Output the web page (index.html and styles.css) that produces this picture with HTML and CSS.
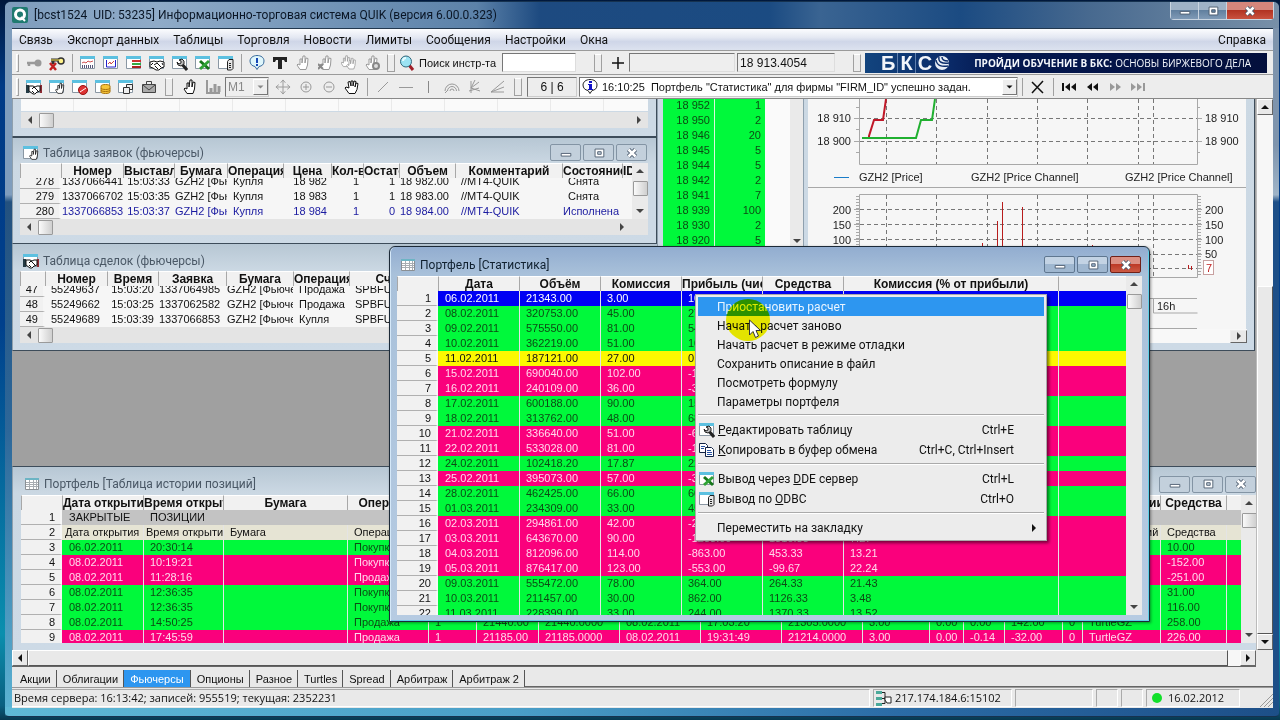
FILE: index.html
```html
<!DOCTYPE html>
<html lang="ru">
<head>
<meta charset="utf-8">
<title>Информационно-торговая система QUIK</title>
<link rel="stylesheet" href="styles.css">
</head>
<body>
<svg class="defs" aria-hidden="true">
  <symbol id="sheet" viewBox="0 0 16 16"><path fill="#fff" stroke="#8a97a3" d="M.5 1.5h14v12H.5z"/><path fill="#5cc0e0" d="M0 1h15v3H0z"/></symbol>
  <symbol id="grid" viewBox="0 0 16 16"><path fill="#fff" stroke="#8a8f94" d="M1.500 2.500h13v11h-13z"/><path fill="#6cb4c4" d="M1 2h14v2H1z"/><path stroke="#a8adb2" d="M5.500 4v9M9.500 4v9M12.500 4v9M2 6.500h12M2 8.500h12M2 10.500h12"/></symbol>
  <symbol id="key" viewBox="0 0 16 16"><path fill="none" stroke="#999" stroke-width="2.500" d="M1 8h9M3 9v2"/><circle cx="12" cy="8" r="3.500" fill="#999"/></symbol>
  <symbol id="keyoff" viewBox="0 0 16 16"><path fill="none" stroke="#333" stroke-width="3" d="M2 5h9M4 6v3"/><circle cx="12" cy="6" r="3" fill="#fff28a" stroke="#333" stroke-width="1.500"/><path stroke="#ffe64a" d="M2 5h8"/><path stroke="#c22020" stroke-width="2.500" d="m1 8 6 7M7 8l-6 7"/></symbol>
  <symbol id="chart" viewBox="0 0 16 16"><use href="#sheet"/><path fill="none" stroke="#d05050" d="m2 8 2-1 2 1 2-2 2 1 3-1"/><path stroke="#557" stroke-dasharray="1 1" stroke-width="3" d="M2 11.500h12"/></symbol>
  <symbol id="chart2" viewBox="0 0 16 16"><use href="#sheet"/><path fill="none" stroke="#22c" d="M3.500 5v7h9V5"/><path fill="none" stroke="#c44" d="m5 9 2-2 1 2 3-3"/></symbol>
  <symbol id="glass" viewBox="0 0 16 16"><use href="#sheet"/><path stroke="#c33" stroke-width="2" d="M6 6h9"/><path stroke="#3a4" stroke-width="2" d="M6 9h9"/><path stroke="#a22" stroke-width="2" d="M6 12h9"/></symbol>
  <symbol id="hands" viewBox="0 0 16 16"><use href="#sheet"/><path fill="#233a44" d="M0 6h3v8H0z"/><path fill="#8c2b33" d="M14 6h2v8h-2z"/><path fill="#fff" stroke="#111" d="M3 7h4l2 1 2-1h3v5l-3 1-2 2H7l-4-3z"/><path stroke="#111" fill="none" d="m6 10 2-2 4 4M6 12l2 2"/></symbol>
  <symbol id="hands2" viewBox="0 0 16 16"><use href="#sheet"/><path fill="#fff" stroke="#111" d="M1 7l4-1 3 1 3-1 4 1v5l-3 1-2 2H7l-3-2-3-1z"/><path stroke="#111" fill="none" d="m5 10 3-2 4 4M6 11l3 3M4 8 2 10M13 8l1 2"/></symbol>
  <symbol id="wrench" viewBox="0 0 16 16"><use href="#sheet"/><path fill="none" stroke="#222" stroke-width="3" d="m9 8 6 7"/><path fill="#bbb" stroke="#222" d="m5 7 2 2 2-1V6L7 5l3-1 2 2v3l-3 2-3-1z"/></symbol>
  <symbol id="excel" viewBox="0 0 16 16"><use href="#sheet"/><path stroke="#15761a" stroke-width="3" d="m5 6 9 8"/><path stroke="#2fa336" stroke-width="3" d="m14 6-9 8"/></symbol>
  <symbol id="base" viewBox="0 0 16 16"><use href="#sheet"/><path fill="#e6e6e6" stroke="#222" d="M9.500 6.500 11 4.500h4v9l-1.500 1.500h-4z"/><path stroke="#222" d="M11 8.500h2M11 10.500h2M11 12.500h2"/></symbol>
  <symbol id="info" viewBox="0 0 16 16"><path fill="#dff6fb" stroke="#3a6c9c" d="M8 .5c4 0 7 2 7 5.500s-2 5-5 5.500l-2 3-2-3C3 11 1 9 1 6S4 .5 8 .5z"/><path stroke="#1747b5" stroke-width="2" d="M8 3v5M8 9v2"/></symbol>
  <symbol id="note" viewBox="0 0 16 16"><path fill="#fff" stroke="#222" d="M8 .5c4 0 7 2 7 5.500s-2 5-5 5.500l-2 3-2-3C3 11 1 9 1 6S4 .5 8 .5z"/><path fill="#1212c8" d="M7 2h3v2H7zM6 5h4v5h1v1H6v-1h1V6H6z"/></symbol>
  <symbol id="tee" viewBox="0 0 16 16"><path fill="#222" d="M1 2h14v5h-2l-1-2h-2v9H6V5H4L3 7H1z"/></symbol>
  <symbol id="palm" viewBox="0 0 16 16"><path fill="#fff" stroke="currentColor" d="M5 14.500 2 10l1-1 2 1V4h2v4l1-7h2v7l1-5 2 .5-.5 6.500-1.500 4.500z"/></symbol>
  <symbol id="palmx" viewBox="0 0 16 16"><use href="#palm"/><path stroke="#888" stroke-width="2" d="m0 9 5 5M5 9l-5 5"/></symbol>
  <symbol id="palms" viewBox="0 0 20 16"><use href="#palm" x="-2" y="-2" width="16" height="16"/><use href="#palm" x="5" y="1" width="16" height="16"/></symbol>
  <symbol id="palmg" viewBox="0 0 16 16"><use href="#palm"/><circle cx="12" cy="11" r="3" fill="#ddd" stroke="#888" stroke-width="2"/></symbol>
  <symbol id="lens" viewBox="0 0 16 16"><path stroke="#a01f28" stroke-width="3" d="m10 10 4 5"/><circle cx="7" cy="6.500" r="5.500" fill="#9be3f3" stroke="#33687c"/><path stroke="#e6fbff" stroke-width="2" fill="none" d="M4 6a3 3 0 0 1 3-3"/></symbol>
  <symbol id="sheetpalm" viewBox="0 0 16 16"><use href="#sheet"/><use href="#palm" x="5" y="3" width="12" height="13"/></symbol>
  <symbol id="stop" viewBox="0 0 16 16"><use href="#sheet"/><circle cx="11" cy="11" r="4.500" fill="#d33" stroke="#911"/><path stroke="#fff" d="m8 13 6-4"/></symbol>
  <symbol id="coins" viewBox="0 0 16 16"><use href="#sheet"/><path fill="#f6c53a" stroke="#a8720c" d="M6 7c0-2 9-2 9 0v6c0 2-9 2-9 0z"/><path fill="none" stroke="#a8720c" d="M6 9c0 2 9 2 9 0M6 11c0 2 9 2 9 0"/></symbol>
  <symbol id="copyw" viewBox="0 0 16 16"><use href="#sheet"/><path fill="#eee" stroke="#333" d="M8.500 5.500h6v5h-6z"/><path fill="#eee" stroke="#333" d="M5.500 8.500h6v6h-6z"/></symbol>
  <symbol id="bag" viewBox="0 0 16 16"><path fill="#aaa" stroke="#444" d="M1.500 5.500h13v8h-13z"/><path fill="none" stroke="#444" d="M5.500 5V2.500h5V5M2 6l6 5 6-5"/></symbol>
  <symbol id="bars" viewBox="0 0 16 16"><path fill="none" stroke="#999" stroke-width="2" d="M2 1v13h13"/><path stroke="#999" stroke-width="3" d="M6 13V9M10 13V5M14 13V7"/></symbol>
  <symbol id="move" viewBox="0 0 17 17"><path fill="none" stroke="#999" d="M8.500 2v13M2 8.500h13M6 4l2.500-3L11 4M6 13l2.500 3 2.500-3M4 6 1 8.500 4 11M13 6l3 2.500-3 2.500"/></symbol>
  <symbol id="zin" viewBox="0 0 16 16"><circle cx="8" cy="8" r="5" fill="none" stroke="#999"/><path stroke="#999" d="M5 8h6M8 5v6"/></symbol>
  <symbol id="zout" viewBox="0 0 16 16"><circle cx="8" cy="8" r="5" fill="none" stroke="#999"/><path stroke="#999" d="M5 8h6"/></symbol>
  <symbol id="hand" viewBox="0 0 16 16"><path fill="#fff" stroke="#111" d="M5 14.500 1 9l1-1 3 1-1-6 2-.5L7 7V2h2v5l1-5 2 .5L11 8l1-4 2 .5-1 6-2 4z"/></symbol>
  <symbol id="diag" viewBox="0 0 16 16"><path stroke="#999" d="M3 13 13 3"/></symbol>
  <symbol id="dash" viewBox="0 0 16 16"><path stroke="#999" d="M1 8.500h14"/></symbol>
  <symbol id="vert" viewBox="0 0 16 16"><path stroke="#888" d="M7.500 2v12"/></symbol>
  <symbol id="arcs" viewBox="0 0 16 16"><path fill="none" stroke="#999" d="M1 12a7 7 0 0 1 14 0M3.500 12a4.500 4.500 0 0 1 9 0M6 12a2 2 0 0 1 4 0M1 14l3-3"/></symbol>
  <symbol id="fan" viewBox="0 0 16 16"><path fill="none" stroke="#999" d="M4 2v12M4 9l8-6M4 9l9 3M4 9l4-8M2 12l10-3"/></symbol>
  <symbol id="rays" viewBox="0 0 16 16"><path fill="none" stroke="#999" d="M1 13 14 2M1 13l13-5M1 13h13"/></symbol>
  <symbol id="cross" viewBox="0 0 16 16"><path stroke="#111" stroke-width="1.500" d="m2 3 11 11M13 2 2 14"/></symbol>
  <symbol id="plus" viewBox="0 0 16 16"><path stroke="#111" stroke-width="1.500" d="M8 2v12M2 8h12"/></symbol>
  <symbol id="first" viewBox="0 0 16 16"><path fill="currentColor" d="M1 4h2v8H1zM9 4v8L4 8zM15 4v8l-5-4z"/></symbol>
  <symbol id="prev" viewBox="0 0 16 16"><path fill="currentColor" d="M8 4v8L3 8zM14 4v8L9 8z"/></symbol>
  <symbol id="next" viewBox="0 0 16 16"><path fill="currentColor" d="m3 4 5 4-5 4zM9 4l5 4-5 4z"/></symbol>
  <symbol id="last" viewBox="0 0 16 16"><path fill="currentColor" d="m1 4 5 4-5 4zM7 4l5 4-5 4zM13 4h2v8h-2z"/></symbol>
  <symbol id="copy" viewBox="0 0 16 16"><path fill="#fff" stroke="#124" d="M.5 1.500h6l2 2v7h-8z"/><path fill="#fff" stroke="#124" d="M6.500 5.500h6l2 2v7h-8z"/><path stroke="#2450a0" d="M2 4.500h4M2 6.500h3M8 8.500h4M8 10.500h5M8 12.500h5"/></symbol>
  <symbol id="net" viewBox="0 0 16 16"><path fill="#4aa99a" d="M0 1h6v3H0zM0 7h6v3H0zM0 13h6v3H0z"/><path fill="none" stroke="#222" d="M6 2.500h3v11H6M6 8.500h4"/><path fill="#fff" stroke="#222" d="M9 7h6v6h-4l-2-3z"/></symbol>
  <symbol id="min" viewBox="0 0 16 16"><path fill="#fff" stroke="#47576a" d="M2.500 8.500h11v3h-11z"/></symbol>
  <symbol id="max" viewBox="0 0 16 16"><path fill="#fff" fill-rule="evenodd" stroke="#47576a" d="M3.500 3.500h10v9h-10zM6.500 6.500v3h4v-3z"/></symbol>
  <symbol id="cls" viewBox="0 0 16 16"><path stroke="#47576a" stroke-width="5" d="m4 4 8 8M12 4l-8 8"/><path stroke="#fff" stroke-width="3" d="m4 4 8 8M12 4l-8 8"/></symbol>
  <symbol id="up" viewBox="0 0 8 8"><path fill="currentColor" d="M4 2 8 6H0z"/></symbol>
  <symbol id="down" viewBox="0 0 8 8"><path fill="currentColor" d="M0 2h8L4 6z"/></symbol>
  <symbol id="left" viewBox="0 0 8 8"><path fill="currentColor" d="M6 0v8L2 4z"/></symbol>
  <symbol id="right" viewBox="0 0 8 8"><path fill="currentColor" d="M2 0v8l4-4z"/></symbol>
</svg>

<div class="app">
  <header class="caption">
    <svg class="logo" viewBox="0 0 16 16"><rect width="16" height="16" rx="2" fill="#1f7a70"/><circle cx="8" cy="7.500" r="4.500" fill="none" stroke="#fff" stroke-width="3"/><path stroke="#fff" stroke-width="2" d="m9 10 4 4"/></svg>
    <h1>[bcst1524&nbsp; UID: 53235] Информационно-торговая система QUIK (версия 6.00.0.323)</h1>
    <div class="sys">
      <button aria-label="Свернуть"><svg><use href="#min"/></svg></button><button aria-label="Развернуть"><svg><use href="#max"/></svg></button><button class="close" aria-label="Закрыть"><svg><use href="#cls"/></svg></button>
    </div>
  </header>

  <div class="client">
    <nav class="menubar">
      <button>Связь</button><button>Экспорт данных</button><button>Таблицы</button><button>Торговля</button><button>Новости</button><button>Лимиты</button><button>Сообщения</button><button>Настройки</button><button>Окна</button><button class="help">Справка</button>
    </nav>

    <div class="toolbar">
      <i class="grip"></i>
      <button><svg><use href="#key"/></svg></button><button><svg><use href="#keyoff"/></svg></button>
      <i class="sep"></i>
      <button><svg><use href="#chart"/></svg></button><button><svg><use href="#chart2"/></svg></button><button><svg><use href="#glass"/></svg></button><button><svg><use href="#hands2"/></svg></button><button><svg><use href="#wrench"/></svg></button><button><svg><use href="#excel"/></svg></button><button><svg><use href="#base"/></svg></button>
      <i class="sep"></i>
      <button><svg><use href="#info"/></svg></button><button><svg><use href="#tee"/></svg></button><button class="off"><svg><use href="#palm"/></svg></button><button class="off"><svg><use href="#palmx"/></svg></button><button class="off"><svg><use href="#palms"/></svg></button><button class="off"><svg><use href="#palmg"/></svg></button>
      <i class="grip mid"></i>
      <label class="search"><svg><use href="#lens"/></svg>Поиск инстр-та<input class="find"></label>
      <i class="grip mid wide"></i>
      <button><svg><use href="#plus"/></svg></button>
      <input class="coord" aria-label="Время"><input class="coord value" aria-label="Цена" value="18 913.4054">
      <i class="grip mid wide"></i>
      <a class="banner" href="#"><span class="bks"><b>Б</b><b>К</b><b>С</b></span><svg viewBox="0 0 16 16"><circle cx="8" cy="8" r="7" fill="#e8eef6"/><path fill="none" stroke="#0b2d6c" stroke-width="1.500" d="M5 2c-1 5 3 7 10 6M2 5c1 6 6 7 12 6M8 2c0 3 3 4 6 4"/></svg><strong>ПРОЙДИ ОБУЧЕНИЕ В БКС:</strong><span>ОСНОВЫ БИРЖЕВОГО ДЕЛА</span></a>
    </div>

    <div class="toolbar second">
      <i class="grip"></i>
      <button><svg><use href="#hands"/></svg></button><button><svg><use href="#sheetpalm"/></svg></button><button><svg><use href="#stop"/></svg></button><button><svg><use href="#coins"/></svg></button><button><svg><use href="#copyw"/></svg></button><button><svg><use href="#bag"/></svg></button>
      <i class="grip mid"></i>
      <button><svg><use href="#palm"/></svg></button><button><svg><use href="#bars"/></svg></button>
      <span class="combo frame"><select aria-label="Интервал"><option>M1</option></select><svg><use href="#down"/></svg></span>
      <button><svg><use href="#move"/></svg></button><button><svg><use href="#zin"/></svg></button><button><svg><use href="#zout"/></svg></button><button><svg><use href="#hand"/></svg></button>
      <i class="sep"></i>
      <button><svg><use href="#diag"/></svg></button><button><svg><use href="#dash"/></svg></button><button><svg><use href="#vert"/></svg></button><button><svg><use href="#arcs"/></svg></button><button><svg><use href="#fan"/></svg></button><button><svg><use href="#rays"/></svg></button>
      <i class="grip mid"></i>
      <output class="count">6 | 6</output>
      <span class="combo message"><svg class="pic"><use href="#note"/></svg><select aria-label="Сообщения"><option>16:10:25&nbsp; Портфель "Статистика" для фирмы "FIRM_ID" успешно задан.</option></select><svg><use href="#down"/></svg></span>
      <i class="sep"></i>
      <button><svg><use href="#cross"/></svg></button>
      <i class="sep"></i>
      <button><svg><use href="#first"/></svg></button><button><svg><use href="#prev"/></svg></button><button class="off"><svg><use href="#next"/></svg></button><button class="off"><svg><use href="#last"/></svg></button>
    </div>

    <div class="workspace">
      <main class="mdi">
        <section class="win w-top">
          <div class="blank"></div>
          <div class="hbar"><svg><use href="#left"/></svg><i class="thumb"></i><svg class="end"><use href="#right"/></svg></div>
        </section>

        <section class="win w-orders">
          <div class="bar"><svg class="pic"><use href="#sheetpalm"/></svg><h2>Таблица заявок (фьючерсы)</h2>
            <div class="sys"><button aria-label="Свернуть"><svg><use href="#min"/></svg></button><button aria-label="Развернуть"><svg><use href="#max"/></svg></button><button aria-label="Закрыть"><svg><use href="#cls"/></svg></button></div></div>
          <div class="pane">
            <div class="view"><table>
              <colgroup><col class="c41"><col class="c62"><col class="c51"><col class="c53"><col class="c56"><col class="c48"><col class="c32"><col class="c36"><col class="c56"><col class="c107"><col class="c60"><col class="c11"></colgroup>
              <thead><tr><th></th><th>Номер</th><th>Выставлена</th><th>Бумага</th><th>Операция</th><th>Цена</th><th>Кол-во</th><th>Остаток</th><th>Объем</th><th>Комментарий</th><th>Состояние</th><th>ID</th></tr></thead>
              <tbody class="tight">
                <tr class="cut"><th>278</th><td>1337066441</td><td class="r">15:03:33</td><td>GZH2 [Фьюч]</td><td class="in">Купля</td><td class="r">18 982</td><td class="r">1</td><td class="r">1</td><td>18 982.00</td><td class="in">//MT4-QUIK</td><td class="in">Снята</td><td></td></tr>
                <tr><th>279</th><td>1337066702</td><td class="r">15:03:35</td><td>GZH2 [Фьюч]</td><td class="in">Купля</td><td class="r">18 983</td><td class="r">1</td><td class="r">1</td><td>18 983.00</td><td class="in">//MT4-QUIK</td><td class="in">Снята</td><td></td></tr>
                <tr class="done"><th>280</th><td>1337066853</td><td class="r">15:03:37</td><td>GZH2 [Фьюч]</td><td class="in">Купля</td><td class="r">18 984</td><td class="r">1</td><td class="r">0</td><td>18 984.00</td><td class="in">//MT4-QUIK</td><td>Исполнена</td><td></td></tr>
              </tbody></table></div>
            <div class="vbar"><svg><use href="#up"/></svg><i class="thumb"></i><svg class="end"><use href="#down"/></svg></div>
          </div>
          <div class="hbar short"><svg><use href="#left"/></svg><i class="thumb"></i><svg class="end"><use href="#right"/></svg></div>
        </section>

        <section class="win w-trades">
          <div class="bar"><svg class="pic"><use href="#hands"/></svg><h2>Таблица сделок (фьючерсы)</h2></div>
          <div class="pane">
            <div class="view"><table>
              <colgroup><col class="c25"><col class="c62"><col class="c51"><col class="c68"><col class="c67"><col class="c56"><col class="c80"></colgroup>
              <thead><tr><th></th><th>Номер</th><th>Время</th><th>Заявка</th><th>Бумага</th><th>Операция</th><th>Счет</th></tr></thead>
              <tbody class="tight">
                <tr class="cut"><th>47</th><td class="in">55249637</td><td class="r">15:03:20</td><td>1337064985</td><td>GZH2 [Фьючерс]</td><td class="in">Продажа</td><td class="in">SPBFUT</td></tr>
                <tr><th>48</th><td class="in">55249662</td><td class="r">15:03:25</td><td>1337062582</td><td>GZH2 [Фьючерс]</td><td class="in">Продажа</td><td class="in">SPBFUT</td></tr>
                <tr><th>49</th><td class="in">55249689</td><td class="r">15:03:39</td><td>1337066853</td><td>GZH2 [Фьючерс]</td><td class="in">Купля</td><td class="in">SPBFUT</td></tr>
              </tbody></table></div>
          </div>
          <div class="hbar"><svg><use href="#left"/></svg><i class="thumb"></i></div>
        </section>

        <section class="win w-quotes">
          <table>
            <colgroup><col class="c51"><col class="c51"></colgroup>
            <tbody class="green">
              <tr><td>18 952</td><td>1</td></tr><tr><td>18 950</td><td>2</td></tr><tr><td>18 946</td><td>20</td></tr><tr><td>18 945</td><td>5</td></tr><tr><td>18 944</td><td>5</td></tr><tr><td>18 942</td><td>2</td></tr><tr><td>18 941</td><td>7</td></tr><tr><td>18 939</td><td>100</td></tr><tr><td>18 930</td><td>2</td></tr><tr><td>18 920</td><td>5</td></tr>
            </tbody></table>
          <div class="vbar"><svg class="end"><use href="#down"/></svg></div>
        </section>

        <section class="win w-chart">
          <svg class="plot" viewBox="808 99 438 230" width="438" height="230">
            <path class="axis" d="M859.500 99v65.500h338V99M859.500 277.500v-83h338v83h-60M808 187.500h438M854 118.500h5M854 141.500h5M1197 118.500h5M1197 141.500h5M856 107.500h3M856 129.500h3M856 152.500h3M1197 107.500h3M1197 129.500h3M1197 152.500h3M854 209.500h5M854 224.500h5M854 239.500h5M1197 209.500h5M1197 224.500h5M1197 239.500h5M1197 254.500h5M1197 268.500h5"/>
            <path class="axis fine" d="M857.500 196v56M1199.500 196v80"/>
            <path class="dash" d="M886.500 99v65M936.500 99v65M987.500 99v65M1037.500 99v65M1087.500 99v65M1138.500 99v65M1153.500 99v65M886.500 195v82M936.500 195v82M987.500 195v82M1037.500 195v82M1087.500 195v82M1138.500 195v82M1153.500 195v82M860 118.500h337M860 141.500h337M860 209.500h337M860 224.500h337M860 239.500h337M860 254.500h337M860 268.500h337"/>
            <path class="red" d="M869 138v-2l5-16h9l3-21"/><path class="grn" d="M862 138h54l5-18h11l3-21"/>
            <path class="vol" d="M997.500 221v28M1002.500 202v47M1022.500 207v42M982.500 243v6M1092.500 245v4M1188.500 265v4M1191.500 266v4"/>
            <path class="price" d="M834 177.500h15"/>
            <rect class="mark" x="1203.500" y="260.500" width="10" height="14"/>
            <path class="axis" d="M1149 298.500h48M1153.500 298v15h44M1149 328.500h48"/>
            <g class="lab e"><text x="851" y="122">18 910</text><text x="851" y="145">18 900</text><text x="851" y="214">200</text><text x="851" y="229">150</text><text x="851" y="244">100</text></g>
            <g class="lab"><text x="1205" y="122">18 910</text><text x="1205" y="145">18 900</text><text x="1205" y="214">200</text><text x="1205" y="229">150</text><text x="1205" y="244">100</text><text x="1205" y="258">50</text><text class="seven" x="1206" y="272">7</text><text x="859" y="181">GZH2 [Price]</text><text x="971" y="181">GZH2 [Price Channel]</text><text x="1125" y="181">GZH2 [Price Channel]</text><text x="1157" y="310">16h</text></g>
          </svg>
          <div class="hbar classic"><button class="end" aria-label="Вправо"><svg><use href="#right"/></svg></button></div>
        </section>

        <section class="win w-history">
          <div class="bar"><svg class="pic"><use href="#grid"/></svg><h2>Портфель [Таблица истории позиций]</h2>
            <div class="sys"><button aria-label="Свернуть"><svg><use href="#min"/></svg></button><button aria-label="Развернуть"><svg><use href="#max"/></svg></button><button aria-label="Закрыть"><svg><use href="#cls"/></svg></button></div></div>
          <div class="pane">
            <div class="view"><table>
              <colgroup><col class="c41"><col class="c81"><col class="c80"><col class="c124"><col class="c81"><col class="c48"><col class="c62"><col class="c81"><col class="c81"><col class="c81"><col class="c81"><col class="c67"><col class="c34"><col class="c41"><col class="c58"><col class="c20"><col class="c78"><col class="c66"><col class="c17"></colgroup>
              <thead><tr><th></th><th>Дата открытия</th><th>Время открытия</th><th>Бумага</th><th>Операция</th><th></th><th></th><th></th><th></th><th></th><th></th><th></th><th></th><th></th><th></th><th></th><th>Комментарии</th><th>Средства</th><th></th></tr></thead>
              <tbody>
                <tr class="gray"><th>1</th><td>ЗАКРЫТЫЕ</td><td>ПОЗИЦИИ</td><td></td><td></td><td></td><td></td><td></td><td></td><td></td><td></td><td></td><td></td><td></td><td></td><td></td><td></td><td></td><td></td></tr>
                <tr class="sand"><th>2</th><td class="full">Дата открытия</td><td class="full">Время открытия</td><td>Бумага</td><td>Операция</td><td></td><td></td><td></td><td></td><td></td><td></td><td></td><td></td><td></td><td></td><td></td><td>Комментарий</td><td>Средства</td><td></td></tr>
                <tr class="green"><th>3</th><td>06.02.2011</td><td>20:30:14</td><td></td><td>Покупка</td><td></td><td></td><td></td><td></td><td></td><td></td><td></td><td></td><td></td><td></td><td></td><td></td><td>10.00</td><td></td></tr>
                <tr class="pink"><th>4</th><td>08.02.2011</td><td>10:19:21</td><td></td><td>Покупка</td><td></td><td></td><td></td><td></td><td></td><td></td><td></td><td></td><td></td><td></td><td></td><td></td><td>-152.00</td><td></td></tr>
                <tr class="pink"><th>5</th><td>08.02.2011</td><td>11:28:16</td><td></td><td>Продажа</td><td></td><td></td><td></td><td></td><td></td><td></td><td></td><td></td><td></td><td></td><td></td><td></td><td>-251.00</td><td></td></tr>
                <tr class="green"><th>6</th><td>08.02.2011</td><td>12:36:35</td><td></td><td>Покупка</td><td></td><td></td><td></td><td></td><td></td><td></td><td></td><td></td><td></td><td></td><td></td><td></td><td>31.00</td><td></td></tr>
                <tr class="green"><th>7</th><td>08.02.2011</td><td>12:36:35</td><td></td><td>Покупка</td><td></td><td></td><td></td><td></td><td></td><td></td><td></td><td></td><td></td><td></td><td></td><td></td><td>116.00</td><td></td></tr>
                <tr class="green"><th>8</th><td>08.02.2011</td><td>14:50:25</td><td></td><td>Продажа</td><td>1</td><td>21440.00</td><td>21440.0000</td><td>08.02.2011</td><td>17:03:20</td><td>21305.0000</td><td>3.00</td><td>0.00</td><td>0.00</td><td>142.00</td><td>0</td><td>TurtleGZ</td><td>258.00</td><td></td></tr>
                <tr class="pink"><th>9</th><td>08.02.2011</td><td>17:45:59</td><td></td><td>Продажа</td><td>1</td><td>21185.00</td><td>21185.0000</td><td>08.02.2011</td><td>19:31:49</td><td>21214.0000</td><td>3.00</td><td>0.00</td><td>-0.14</td><td>-32.00</td><td>0</td><td>TurtleGZ</td><td>226.00</td><td></td></tr>
              </tbody></table></div>
            <div class="vbar"><svg><use href="#up"/></svg><i class="thumb"></i><svg class="end"><use href="#down"/></svg></div>
          </div>
        </section>

        <section class="win active w-stat">
          <div class="bar"><svg class="pic"><use href="#grid"/></svg><h2>Портфель [Статистика]</h2>
            <div class="sys"><button aria-label="Свернуть"><svg><use href="#min"/></svg></button><button aria-label="Развернуть"><svg><use href="#max"/></svg></button><button class="close" aria-label="Закрыть"><svg><use href="#cls"/></svg></button></div></div>
          <div class="pane">
            <div class="view"><table>
              <colgroup><col class="c41"><col class="c81"><col class="c81"><col class="c81"><col class="c81"><col class="c81"><col class="c215"><col class="c68"></colgroup>
              <thead><tr><th></th><th>Дата</th><th>Объём</th><th>Комиссия</th><th>Прибыль (чистая)</th><th>Средства</th><th>Комиссия (% от прибыли)</th><th></th></tr></thead>
              <tbody>
                <tr class="blue"><th>1</th><td>06.02.2011</td><td>21343.00</td><td>3.00</td><td>10.00</td><td>10.00</td><td>30</td><td></td></tr>
                <tr class="green"><th>2</th><td>08.02.2011</td><td>320753.00</td><td>45.00</td><td>27</td><td></td><td></td><td></td></tr>
                <tr class="green"><th>3</th><td>09.02.2011</td><td>575550.00</td><td>81.00</td><td>54</td><td></td><td></td><td></td></tr>
                <tr class="green"><th>4</th><td>10.02.2011</td><td>362219.00</td><td>51.00</td><td>10</td><td></td><td></td><td></td></tr>
                <tr class="yellow"><th>5</th><td>11.02.2011</td><td>187121.00</td><td>27.00</td><td>0.00</td><td></td><td></td><td></td></tr>
                <tr class="pink"><th>6</th><td>15.02.2011</td><td>690040.00</td><td>102.00</td><td>-1</td><td></td><td></td><td></td></tr>
                <tr class="pink"><th>7</th><td>16.02.2011</td><td>240109.00</td><td>36.00</td><td>-3</td><td></td><td></td><td></td></tr>
                <tr class="green"><th>8</th><td>17.02.2011</td><td>600188.00</td><td>90.00</td><td>15</td><td></td><td></td><td></td></tr>
                <tr class="green"><th>9</th><td>18.02.2011</td><td>313762.00</td><td>48.00</td><td>68</td><td></td><td></td><td></td></tr>
                <tr class="pink"><th>10</th><td>21.02.2011</td><td>336640.00</td><td>51.00</td><td>-6</td><td></td><td></td><td></td></tr>
                <tr class="pink"><th>11</th><td>22.02.2011</td><td>533028.00</td><td>81.00</td><td>-1</td><td></td><td></td><td></td></tr>
                <tr class="green"><th>12</th><td>24.02.2011</td><td>102418.20</td><td>17.87</td><td>22</td><td></td><td></td><td></td></tr>
                <tr class="pink"><th>13</th><td>25.02.2011</td><td>395073.00</td><td>57.00</td><td>-3</td><td></td><td></td><td></td></tr>
                <tr class="green"><th>14</th><td>28.02.2011</td><td>462425.00</td><td>66.00</td><td>60</td><td></td><td></td><td></td></tr>
                <tr class="green"><th>15</th><td>01.03.2011</td><td>234309.00</td><td>33.00</td><td>45</td><td></td><td></td><td></td></tr>
                <tr class="pink"><th>16</th><td>02.03.2011</td><td>294861.00</td><td>42.00</td><td>-2</td><td></td><td></td><td></td></tr>
                <tr class="pink"><th>17</th><td>03.03.2011</td><td>643670.00</td><td>90.00</td><td>-1238.00</td><td>1316.33</td><td>7.27</td><td></td></tr>
                <tr class="pink"><th>18</th><td>04.03.2011</td><td>812096.00</td><td>114.00</td><td>-863.00</td><td>453.33</td><td>13.21</td><td></td></tr>
                <tr class="pink"><th>19</th><td>05.03.2011</td><td>876417.00</td><td>123.00</td><td>-553.00</td><td>-99.67</td><td>22.24</td><td></td></tr>
                <tr class="green"><th>20</th><td>09.03.2011</td><td>555472.00</td><td>78.00</td><td>364.00</td><td>264.33</td><td>21.43</td><td></td></tr>
                <tr class="green"><th>21</th><td>10.03.2011</td><td>211457.00</td><td>30.00</td><td>862.00</td><td>1126.33</td><td>3.48</td><td></td></tr>
                <tr class="green"><th>22</th><td>11.03.2011</td><td>228399.00</td><td>33.00</td><td>244.00</td><td>1370.33</td><td>13.52</td><td></td></tr>
              </tbody></table></div>
            <div class="vbar"><svg><use href="#up"/></svg><i class="thumb"></i><svg class="end"><use href="#down"/></svg></div>
          </div>
        </section>

        <div class="popup" role="menu">
          <button class="hot" role="menuitem">Приостановить расчет</button>
          <button role="menuitem">Начать расчет заново</button>
          <button role="menuitem">Начать расчет в режиме отладки</button>
          <button role="menuitem">Сохранить описание в файл</button>
          <button role="menuitem">Посмотреть формулу</button>
          <button role="menuitem">Параметры портфеля</button>
          <hr>
          <button class="tall" role="menuitem"><svg><use href="#wrench"/></svg><span><u>Р</u>едактировать таблицу</span><kbd>Ctrl+E</kbd></button>
          <button class="tall" role="menuitem"><svg><use href="#copy"/></svg><span><u>К</u>опировать в буфер обмена</span><kbd>Ctrl+C, Ctrl+Insert</kbd></button>
          <hr>
          <button class="tall" role="menuitem"><svg><use href="#excel"/></svg><span>Вывод через <u>D</u>DE сервер</span><kbd>Ctrl+L</kbd></button>
          <button class="tall" role="menuitem"><svg><use href="#base"/></svg><span>Вывод по <u>O</u>DBC</span><kbd>Ctrl+O</kbd></button>
          <hr>
          <button role="menuitem">Переместить на закладку<svg class="more"><use href="#right"/></svg></button>
        </div>
        <i class="halo"></i>
        <svg class="cursor" viewBox="0 0 12 20"><path fill="#fff" stroke="#333" d="M.5 1v15l3.500-3.500 2.500 6 3-1.500-2.500-5.500h4.500z"/></svg>
      </main>
      <div class="vscroll"><button aria-label="Вверх"><svg><use href="#up"/></svg></button><i class="track"></i><i class="slab"></i><button aria-label="Вниз"><svg><use href="#down"/></svg></button></div>
      <div class="hscroll"><button aria-label="Влево"><svg><use href="#left"/></svg></button><i class="slab"></i><i class="track"></i><button aria-label="Вправо"><svg><use href="#right"/></svg></button></div>
    </div>

    <nav class="tabs">
      <button>Акции</button><button>Облигации</button><button class="on">Фьючерсы</button><button>Опционы</button><button>Разное</button><button>Turtles</button><button>Spread</button><button>Арбитраж</button><button>Арбитраж 2</button>
    </nav>

    <footer class="status">
      <span class="long">Время сервера: 16:13:42; записей: 955519; текущая: 2352231</span>
      <span class="server"><svg><use href="#net"/></svg>217.174.184.6:15102</span>
      <span class="p1"></span><span class="p2"></span><span class="p2"></span>
      <span class="date"><i class="lamp"></i>16.02.2012</span>
      <svg class="resize" viewBox="0 0 14 14"><path stroke="#999" d="M1 14 14 1M5 14l9-9M9 14l5-5"/></svg>
    </footer>
  </div>
</div>
</body>
</html>
```
FILE: styles.css
```css
* { box-sizing: border-box; }

:root {
  --ui: Roboto, "Open Sans", "Noto Sans", sans-serif;
  --small: "Open Sans", "Noto Sans", sans-serif;
  --data: "Liberation Sans", Arial, sans-serif;
  --face: #e9e9e9;
  --line: #9a9a9a;
}

body {
  margin: 0;
  height: 100vh;
  display: flex;
  overflow: hidden;
  font: 12px/16px var(--ui);
  color: #111;
  background: linear-gradient(#00183c, #003a86 12%, #00408c 45%, #0a8fae 88%, #0a5f80 98%, #083850);
}

svg { width: 16px; height: 16px; flex: none; }
.defs { position: absolute; width: 0; height: 0; }

button {
  margin: 0;
  padding: 0;
  border: 0;
  background: none;
  font: inherit;
  color: inherit;
  display: flex;
  align-items: center;
  justify-content: center;
}

/* application frame */
.app {
  flex: 1;
  min-width: 0;
  display: flex;
  flex-direction: column;
  margin: 1px 1px 3px 5px;
  padding: 0 6px 8px 7px;
  border: 1px solid #16324f;
  border-width: 1px 0;
  border-radius: 6px 6px 4px 4px;
  background:
    linear-gradient(90deg, #5fb9d6, #4a9fc8 40%, #2b6ca6 70%, #1d4f88) bottom / 100% 9px no-repeat,
    linear-gradient(#7f9dbd 27%, #23517f 28%, #2d6799 60%, #5db4d4) left / 50% 100% no-repeat,
    linear-gradient(#7e94ad 20%, #9fb4c8 27%, #1d4f88 28%) right / 50% 100% no-repeat;
}

.caption {
  height: 26px;
  flex: none;
  display: flex;
  align-items: center;
  gap: 6px;
  margin: 0 -6px 0 -7px;
  padding-left: 7px;
  border-radius: 6px 6px 0 0;
  background: linear-gradient(90deg, #7e9cbc, #8fabc8 12%, #6d90b4 28%, #5c82a9 37%, #1d4a80 42%, #1b4b82 60%, #3a6492 64%, #1b4b82 75%, #47698f 85%, #7890a8);
}
.caption h1 { margin: 0; font: 12px/20px var(--ui); color: #0a1626; }
.logo { width: 16px; height: 16px; }

.sys { margin-left: auto; display: flex; }
.caption .sys { align-self: flex-start; margin-right: 5px; border: 1px solid #c8d4e0; border-top: 0; border-radius: 0 0 4px 4px; }
.caption .sys button { width: 28px; height: 17px; background: linear-gradient(#9fb2c6 50%, #61809f 50%, #7f9ab6); border-right: 1px solid #c8d4e0; }
.caption .sys .close { width: 46px; border: 0; background: linear-gradient(#d5867b 50%, #b23322 50%, #c9523f); }
.caption .sys svg { width: 14px; height: 14px; }

.client {
  flex: 1;
  min-height: 0;
  display: flex;
  flex-direction: column;
  border-top: 1px solid #22384f;
  background: var(--face);
}

.menubar {
  height: 21px;
  flex: none;
  display: flex;
  align-items: center;
  gap: 14px;
  padding: 0 7px;
  background: linear-gradient(#fbfcfe, #e4e8f2 40%, #cfd6e8 60%, #dce2ef);
}
.menubar .help { margin-left: auto; }

.toolbar {
  height: 24px;
  flex: none;
  display: flex;
  align-items: center;
  border-top: 1px solid var(--line);
  background: #ededed;
}
.toolbar button { width: 23px; height: 22px; flex: none; }
.toolbar .off { color: #999; }
.grip { flex: none; width: 3px; height: 18px; margin: 0 3px 0 4px; border: 1px solid #a0a0a0; border-left-color: #fff; border-top-color: #fff; }
.grip.mid { width: 8px; margin: 0 4px 0 4px; border-left-color: #a0a0a0; }
.second .grip.mid { margin: 0 5px; }
.grip.wide { margin-left: 18px; }
.sep { flex: none; width: 1px; height: 18px; margin: 0 3px 0 4px; background: #a0a0a0; }
.search { display: flex; align-items: center; gap: 4px; white-space: nowrap; font: 11px/16px var(--data); }
input, select { font: 11px var(--data); color: #111; margin: 0; border-radius: 0; outline: 0; }
.find { width: 74px; height: 19px; margin-left: 2px; border: 1px solid #ddd; border-color: #777 #ddd #ddd #777; }
.coord { width: 106px; height: 19px; margin-right: 2px; background: #eee; border: 1px solid #ddd; border-color: #777 #ddd #ddd #777; }
.coord.value { width: 98px; margin: 0; font-size: 12px; padding: 0 2px; }

.banner {
  flex: 1;
  min-width: 0;
  height: 20px;
  margin-right: 6px;
  padding-left: 14px;
  display: flex;
  align-items: center;
  overflow: hidden;
  white-space: nowrap;
  color: #f2f5fa;
  text-decoration: none;
  font: 10px/16px var(--small);
  background: linear-gradient(90deg, #12447e, #0b2c6a 20%, #041850 32%, #030f3c);
}
.bks { display: flex; font: 20px/20px var(--data); }
.bks b { padding: 0 2px; border-right: 1px solid #5f7fae; }
.bks b:last-child { border: 0; }
.banner strong { margin: 0 3px 0 24px; }

.combo { position: relative; display: flex; align-items: center; flex: none; border: 1px solid #ccc; border-color: #777 #ccc #ccc #777; background: #fff; }
.combo select { appearance: none; flex: 1; min-width: 0; border: 0; background: none; padding: 0 20px 0 2px; height: 18px; }
.combo > svg:last-child { width: 15px; height: 16px; padding: 4px 3px; background: #eee; border: 1px solid #777; border-color: #fff #777 #777 #fff; margin-left: -16px; pointer-events: none; }
.combo.frame { width: 44px; height: 20px; margin: 0 2px 0 1px; background: #eee; color: #888; }
.combo.frame select { color: #888; font-size: 12px; }
.combo.message { flex: 0 1 439px; height: 20px; }
.combo.message select { padding-left: 4px; }
.message .pic { margin-left: 2px; }
.count { width: 50px; height: 20px; margin-right: 2px; text-align: center; font: 12px/18px var(--data); border: 1px solid #ccc; border-color: #777 #ccc #ccc #777; }

/* document area with its outer scrollbars */
.workspace {
  flex: 1;
  min-height: 0;
  display: grid;
  grid-template: minmax(0, 1fr) 17px / minmax(0, 1fr) 17px;
  border-top: 1px solid #888;
}
.mdi { position: relative; overflow: hidden; background: #a0a0a0; }
.vscroll { display: flex; flex-direction: column; border-left: 1px solid #bbb; }
.hscroll { display: flex; grid-column: 1; border-bottom: 1px solid #666; }
.vscroll button, .hscroll button { flex: none; width: 16px; height: 16px; background: var(--face); border: 1px solid #666; border-color: #fff #666 #666 #fff; }
.vscroll svg, .hscroll svg, .hbar svg, .vbar svg { width: 8px; height: 8px; }
.track { flex: 171; background: #f7f7f7; }
.slab { flex: 346; border: 1px solid #555; border-color: #fff #555 #555 #fff; background: var(--face); }
.hscroll .slab { flex: 1199; }
.hscroll .track { flex: 12; }

/* child windows sit freely on the document area */
.win {
  position: absolute;
  display: flex;
  flex-direction: column;
  padding: 0 8px 8px;
  border: 1px solid #3d4c5a;
  border-left-color: #8fa0ae;
  background: linear-gradient(#b7c7d4, #cbd8e3 26px, #cddae6);
  font: 11px/15px var(--data);
}
.win.active {
  border-color: #1c2a38;
  border-radius: 6px 6px 0 0;
  background: linear-gradient(#92add0, #a9c1da 28px, #b6cbe2);
  box-shadow: inset 1px 0 #d5e8f8, inset -1px -1px #5fd0e8, 1px 1px 3px #0006;
}
.w-top { left: 0; top: -40px; width: 645px; height: 78px; }
.w-orders { left: 0; top: 38px; width: 645px; height: 107px; padding-left: 7px; }
.w-trades { left: 0; top: 144px; width: 646px; height: 108px; padding: 0 8px 7px 7px; }
.w-quotes { left: 645px; top: -40px; width: 147px; height: 292px; }
.w-chart { left: 791px; top: -40px; width: 452px; height: 292px; }
.w-history { left: 0; top: 367px; width: 1254px; height: 186px; }
.w-stat { left: 377px; top: 147px; width: 761px; height: 376px; padding: 0 7px 6px; }

.bar { flex: none; height: 25px; display: flex; align-items: center; gap: 4px; padding: 4px 0 0 3px; }
.bar h2 { margin: 0; font: 12px/16px var(--ui); color: #4a5866; }
.active .bar { height: 29px; padding-top: 6px; }
.active .bar h2 { color: #10202f; }
.w-trades .bar { height: 27px; padding-top: 6px; }
.w-history .bar { height: 28px; padding-top: 6px; }
.bar .sys { gap: 2px; padding-right: 1px; }
.bar .sys button { width: 31px; height: 17px; border: 1px solid #8394a4; border-radius: 2px; background: #c3d0dc; }
.bar .sys svg { width: 14px; height: 14px; }
.active .sys button { border-color: #5f7790; background: linear-gradient(#c3d3e4 50%, #9fb7d0 50%); }
.active .sys .close { border-color: #702018; background: linear-gradient(#dc9084 50%, #bd3a27 50%, #cc5a44); }

.pane { display: flex; flex: 1; min-height: 0; }
.view { flex: 1; min-width: 0; overflow: hidden; background: #f6f6f6; }
.vbar { flex: none; width: 16px; display: flex; flex-direction: column; align-items: center; padding: 4px 0; background: #eaeaea; color: #444; }
.hbar { flex: none; height: 16px; display: flex; align-items: center; padding: 0 5px; background: #e4e4e4; color: #444; }
.hbar.short { padding-right: 22px; }
.end { margin-left: auto; }
.vbar .end { margin: auto 0 0; }
.thumb { width: 15px; height: 15px; border: 1px solid #9a9a9a; border-radius: 1px; background: linear-gradient(90deg, #fafafa, #cfcfcf); }
.hbar .thumb { margin-left: 5px; }
.vbar .thumb { margin-top: 6px; }
.blank { flex: 1; margin-bottom: 1px; background: repeating-linear-gradient(90deg, #fafafa 0 52px, #eaeaea 52px 53px); }

table { width: 1px; table-layout: fixed; border-collapse: separate; border-spacing: 0; }
th, td { height: 15px; padding: 0; overflow: hidden; white-space: nowrap; line-height: 15px; }
thead th { position: relative; font-size: 12px; text-align: center; background: #f1f1f1; border-left: 1px solid #a8a8a8; border-top: 1px solid #fff; line-height: 14px; }
tbody th { font-weight: 400; text-align: right; padding-right: 5px; background: #f1f1f1; border-bottom: 1px solid #b0b0b0; border-right: 2px solid #f6f6f6; line-height: 14px; }
td { padding-left: 6px; }
.w-history td, .w-stat td { border-left: 1px solid #e4e4e4; }
.w-history td:nth-child(2), .w-stat td:nth-child(2) { border-left-color: transparent; }
.w-history .full { padding-left: 2px; }
.tight td { padding-left: 1px; }
.tight .in { padding-left: 6px; }
.tight .r { text-align: right; padding: 0 4px 0 0; }
.w-orders .cut > *, .w-trades .cut > * { height: 11px; line-height: 7px; padding-bottom: 4px; }
.w-orders .cut > th, .w-trades .cut > th { padding-bottom: 3px; }
.done td { color: #1a1aa0; }
.green td { background: #00f93b; color: #0c4a14; }
.pink td { background: #fa007c; color: #ffd9ec; }
.yellow td { background: #fcf800; }
.blue td { background: #0000f4; color: #fff; }
.gray td { background: #c3c3c3; }
.sand td { background: #e6e4d4; }
.w-history .gray td { border-color: #c3c3c3; }

.c11 { width: 11px; } .c17 { width: 17px; } .c20 { width: 20px; } .c25 { width: 25px; }
.c32 { width: 32px; } .c34 { width: 34px; } .c36 { width: 36px; } .c41 { width: 41px; }
.c48 { width: 48px; } .c51 { width: 51px; } .c53 { width: 53px; } .c56 { width: 56px; }
.c58 { width: 58px; } .c60 { width: 60px; } .c62 { width: 62px; } .c66 { width: 66px; }
.c67 { width: 67px; } .c68 { width: 68px; } .c78 { width: 78px; } .c80 { width: 80px; }
.c81 { width: 81px; } .c107 { width: 107px; } .c124 { width: 124px; } .c215 { width: 215px; }

.w-quotes { flex-direction: row; justify-content: space-between; padding: 38px 0 0 5px; background: linear-gradient(90deg, #cddae6 5px, #fafafa 5px); }
.w-quotes table { align-self: flex-start; }
.w-quotes td { text-align: right; padding-right: 4px; }
.w-quotes td + td { border-left: 1px solid #d8f8dc; }
.w-quotes .vbar { width: 13px; height: 151px; }

.w-chart { padding: 39px 7px 7px 4px; }
.plot { width: 438px; height: 230px; background: #f6f6f6; }
.axis { fill: none; stroke: #a8a8a8; }
.axis.fine { stroke-width: 3; stroke-dasharray: 1 2; }
.dash { fill: none; stroke: #777; stroke-dasharray: 4 3; }
.red, .grn { fill: none; stroke: #c01828; stroke-width: 2; }
.grn { stroke: #20b030; }
.vol { stroke: #b81c1c; }
.price { stroke: #1a7cc8; }
.mark { fill: #fff; stroke: #c8a0a0; }
.lab { font: 11px var(--data); fill: #222; }
.lab.e { text-anchor: end; }
.seven { fill: #c02020; }
.classic { flex: 1; padding: 0; background: #f8f8f8; }
.classic button { width: 17px; height: 13px; background: var(--face); border: 1px solid #666; border-color: #eee #666 #666 #eee; }

/* context menu */
.popup {
  position: absolute;
  left: 683px;
  top: 195px;
  width: 352px;
  padding: 2px 2px 3px;
  display: flex;
  flex-direction: column;
  background: #ececec;
  border: 1px solid #aaa;
  box-shadow: 2px 2px 3px #0008;
}
.popup button { height: 19px; padding: 0 6px 0 19px; justify-content: flex-start; }
.popup .tall { height: 20px; padding: 0 30px 0 1px; gap: 3px; }
.popup .hot { background: #2d96f0; color: #e8f4ff; }
.popup hr { width: 100%; margin: 3px 0 4px; border: 0; border-top: 1px solid #aaa; border-bottom: 1px solid #fff; }
.popup kbd { margin-left: auto; font: inherit; }
.popup .more { width: 8px; height: 8px; margin-left: auto; }
.halo { position: absolute; left: 714px; top: 200px; width: 44px; height: 42px; border-radius: 50%; background: #f6f600; mix-blend-mode: multiply; }
.cursor { position: absolute; left: 737px; top: 220px; width: 12px; height: 20px; }

.tabs { flex: none; height: 21px; display: flex; padding: 3px 0 0 2px; font: 11px/16px var(--data); border-bottom: 1px solid #999; }
.tabs::after { content: ""; flex: 1; border-bottom: 1px solid #666; }
.tabs button { height: 17px; padding: 1px 5px 0 6px; border-right: 1px solid #555; }
.tabs .on { background: #2d96f0; color: #fff; padding: 0 6px; }

.status { flex: none; height: 20px; display: flex; align-items: center; gap: 3px; padding: 1px 0; font: 11px/16px var(--small); }
.status span { height: 18px; display: flex; align-items: center; gap: 3px; padding-left: 2px; white-space: nowrap; border: 1px solid #fff; border-color: #aaa #fff #fff #aaa; }
.status .long { flex: 1; border-left: 0; }
.status .server { width: 139px; }
.p1 { width: 78px; }
.p2 { width: 22px; }
.status .date { width: 94px; gap: 6px; padding-left: 5px; }
.lamp { width: 10px; height: 10px; border-radius: 50%; background: #12e02a; }
.resize { width: 14px; height: 14px; margin-left: 16px; align-self: flex-end; }
```
